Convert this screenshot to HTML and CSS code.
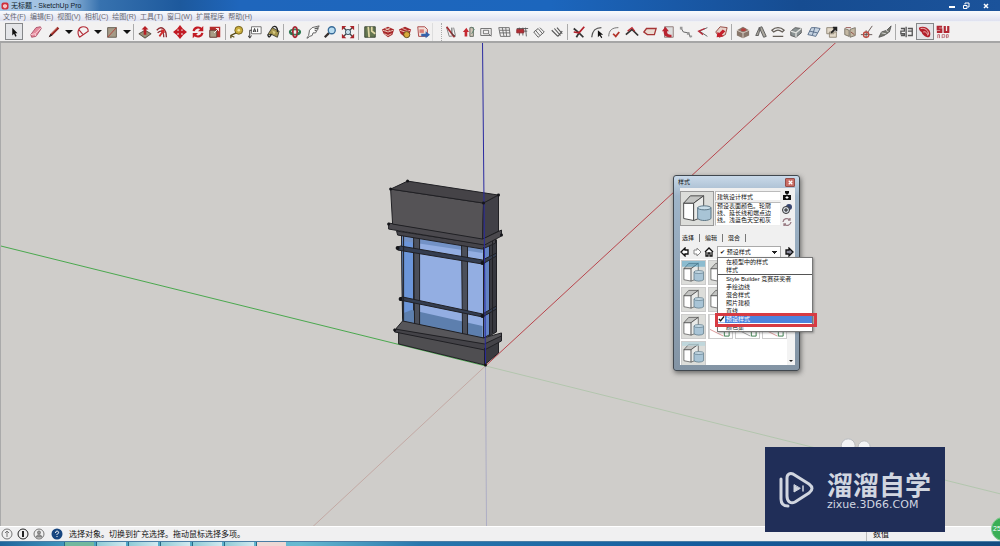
FILE: index.html
```html
<!DOCTYPE html>
<html lang="zh-CN">
<head>
<meta charset="utf-8">
<title>无标题 - SketchUp Pro</title>
<link rel="stylesheet" href="styles.css">
</head>
<body>
<div class="app">
<header class="titlebar">
  <svg class="app-icon" viewBox="0 0 8 8"><rect x="0.500" y="0.500" width="7" height="7" rx="2" fill="#d0303c"/><path d="M2 3l2-1 2 1v2L4 6.500 2 5z" fill="#f7c5c5"/></svg>
  <h1 class="title">无标题 - SketchUp Pro</h1>
  <div class="window-buttons">
    <button aria-label="最小化"><svg viewBox="0 0 8 8"><path d="M1 5h6" stroke="#fff" stroke-width="2"/></svg></button>
    <button aria-label="还原"><svg viewBox="0 0 8 8" fill="none" stroke="#fff"><path d="M3 2.500V1h4v4H5.500M1.500 3.500h3.500v3h-3.500z"/></svg></button>
    <button class="win-close" aria-label="关闭"><svg viewBox="0 0 8 8"><path d="M2 2l4 4M6 2L2 6" stroke="#fff" stroke-width="1.500"/></svg></button>
  </div>
</header>
<nav class="menubar">
  <button>文件(F)</button><button>编辑(E)</button><button>视图(V)</button><button>相机(C)</button><button>绘图(R)</button><button>工具(T)</button><button>窗口(W)</button><button>扩展程序</button><button>帮助(H)</button>
</nav>
<div class="toolbar">
  <div class="draw-tools">
    <button class="tool pressed select-tool" aria-label="选择"><svg viewBox="0 0 16 16"><path d="M6 3v9l2-2 1.500 3.500 1.500-1L9.500 9.500H12z" fill="#111"/></svg></button>
    <button class="tool" aria-label="橡皮擦"><svg viewBox="0 0 16 16"><path d="M2 11L8 3l5-1 1 2-6 9-5 1z" fill="#e58b9d" stroke="#a84a62"/><path d="M2 11l5-1 1 3M7 10l7-7" stroke="#fbd5dc" fill="none"/></svg></button>
    <button class="tool" aria-label="直线"><svg viewBox="0 0 16 16"><path d="M2 14l2-4 8-8 2 2-8 8z" fill="#8f2525"/><path d="M2 14l2-4 2 2z" fill="#222"/><path d="M5 10l7-7" stroke="#d66b55"/></svg></button>
    <button class="drop" aria-label="更多直线工具"></button>
    <button class="tool" aria-label="圆弧"><svg viewBox="0 0 16 16" fill="none" stroke="#b32a35"><path d="M4 14C0 7 4 2 8 2c4 0 6 2 6 5L4 14M3 5l5 6" stroke-width="1.300"/></svg></button>
    <button class="drop" aria-label="更多圆弧工具"></button>
    <button class="tool" aria-label="矩形"><svg viewBox="0 0 16 16"><path d="M3 3h10v11H3z" fill="#a69b87" stroke="#5e574c"/><path d="M3 14L13 3" stroke="#b33a35"/></svg></button>
    <button class="drop" aria-label="更多形状"></button>
  </div>
  <i class="sep"></i>
  <div class="tools five">
    <button class="tool" aria-label="推拉"><svg viewBox="0 0 16 16"><path d="M1 10l7-4 7 4-7 5z" fill="#9a9078" stroke="#4c463a"/><path d="M8 1l4 4H9.500v6h-3V5H4z" fill="#b72026"/></svg></button>
    <button class="tool" aria-label="偏移"><svg viewBox="0 0 16 16" fill="none"><path d="M2 6c5-6 11-2 11 8M3 9c4-4 7-2 7 5" stroke="#8e2b31" stroke-width="1.500"/><path d="M5 13l5-7M7 6h3v3" stroke="#d02b2b" stroke-width="2"/></svg></button>
    <button class="tool" aria-label="移动"><svg viewBox="0 0 16 16"><path d="M8 0l4 5H9.500v1.500H11V4l5 4-5 4V9.500H9.500V11H12l-4 5-4-5h2.500V9.500H5V12L0 8l5-4v2.500h1.500V5H4z" fill="#c21b24"/></svg></button>
    <button class="tool" aria-label="旋转"><svg viewBox="0 0 16 16"><path d="M3 7a5 5 0 0 1 9-2M13 9a5 5 0 0 1-9 2" stroke="#c21b24" stroke-width="2.500" fill="none"/><path d="M14 1v6H8zM2 15V9h6z" fill="#c21b24"/></svg></button>
    <button class="tool" aria-label="缩放"><svg viewBox="0 0 16 16"><path d="M2 2h12v12H2z" fill="#b52b2a"/><path d="M2 6h8v8H2z" fill="#a99d86" stroke="#5e3b32"/><path d="M7 9l5-5M9 4h3v3" stroke="#fff" fill="none"/></svg></button>
  </div>
  <i class="sep"></i>
  <div class="tools three">
    <button class="tool" aria-label="卷尺"><svg viewBox="0 0 16 16"><circle cx="10" cy="6" r="4.500" fill="#c9ac3c" stroke="#6b5918"/><circle cx="10" cy="6" r="1.500" fill="#f5e9a5"/><path d="M7 9l-6 3v3M1 12l4 2" stroke="#5b4d17" stroke-width="1.500" fill="none"/></svg></button>
    <button class="tool" aria-label="文字"><svg viewBox="0 0 16 16"><path d="M4 2h11v8H4z" fill="#fff" stroke="#666"/><path d="M6 8l1.500-4L9 8M6.500 7h2M11 4v4M4 6H2v8M0 12l2 3 2-3" stroke="#222" fill="none"/></svg></button>
    <button class="tool" aria-label="材质"><svg viewBox="0 0 16 16"><path d="M2 11l5-8 8 4-2 7-6-3z" fill="#a5954c" stroke="#37372b"/><path d="M7 3c4-4 7 1 6 5M2 11c1 4 3 3 4-1" fill="none" stroke="#222" stroke-width="1.500"/><path d="M7 6l4 2-2 3z" fill="#d9cb83"/></svg></button>
  </div>
  <i class="sep"></i>
  <div class="tools four">
    <button class="tool" aria-label="环绕观察"><svg viewBox="0 0 16 16" fill="none" stroke-width="2"><ellipse cx="8" cy="8" rx="6" ry="3" stroke="#36835b"/><ellipse cx="8" cy="8" rx="2.500" ry="6" stroke="#a62632"/><path d="M2 7l3 4M14 7l-3 4" stroke="#2d6e4a"/></svg></button>
    <button class="tool" aria-label="平移"><svg viewBox="0 0 16 16"><path d="M1 15l2-3 1-6 3-3 8-2-1 2-4 1 4 0-1 2-3 0 2 1-1 2-3 0-1 3-3 1-2 2z" fill="#fbfbfa" stroke="#555"/></svg></button>
    <button class="tool" aria-label="缩放视图"><svg viewBox="0 0 16 16"><path d="M2 14l5-5" stroke="#352f2d" stroke-width="2.500"/><circle cx="10" cy="6" r="4" fill="#b9dcf0" stroke="#376b98" stroke-width="1.500"/></svg></button>
    <button class="tool" aria-label="充满视窗"><svg viewBox="0 0 16 16"><path d="M2 2l12 12M14 2L2 14" stroke="#444" stroke-width="1.500"/><path d="M1 1h5L1 6zM15 1v5l-5-5zM1 15v-5l5 5zM15 15h-5l5-5z" fill="#a9252b"/><circle cx="8" cy="8" r="3" fill="#c5dfea" stroke="#344c5c"/></svg></button>
  </div>
  <i class="sep"></i>
  <div class="tools four">
    <button class="tool" aria-label="添加位置"><svg viewBox="0 0 16 16"><path d="M2 2h12v12H2z" fill="#657651" stroke="#36402e"/><path d="M6 2l1 12M10 2v5l4 3" stroke="#e1d9a6" stroke-width="2" fill="none"/></svg></button>
    <button class="tool" aria-label="获取模型"><svg viewBox="0 0 16 16"><path d="M1 5l7-3 7 3-2 6-5 3-5-4z" fill="#a7282b"/><path d="M2 6l6 2 6-2M4 10l4 2 4-2M5 4l5 2M11 3L5 6" stroke="#efd4c3" fill="none"/></svg></button>
    <button class="tool" aria-label="扩展仓库"><svg viewBox="0 0 16 16"><path d="M1 5l7-3 7 3-2 6-5 3-5-4z" fill="#a7282b"/><path d="M2 6l6 2 6-2M5 4l5 2" stroke="#efc5b5" fill="none"/><circle cx="10" cy="11" r="3.500" fill="#d8aa3c" stroke="#5b4817"/></svg></button>
    <button class="tool" aria-label="发送到布局"><svg viewBox="0 0 16 16"><path d="M2 2h8l3 3v8H3z" fill="#f1dfd9" stroke="#a53c3c"/><path d="M4 5h5v4H4z" fill="#d87b74"/><path d="M6 10h5V7l5 4-5 4v-2H6z" fill="#3462ac"/></svg></button>
  </div>
  <i class="grip"></i>
  <div class="tools seven">
    <button class="tool" aria-label="切割"><svg viewBox="0 0 16 16" fill="none"><path d="M3 3l3 10 7-1-2-9" stroke="#777"/><path d="M3 2l9 12" stroke="#a42d31" stroke-width="2"/><path d="M9 3v7l4 3" stroke="#444"/></svg></button>
    <button class="tool" aria-label="镜像"><svg viewBox="0 0 16 16"><path d="M1 8l4-5 3 5H6v5H3V8z" fill="#c52931"/><path d="M9 3h4v10H9z" fill="#d0c7b9" stroke="#5b645a"/><path d="M11 2l3 3-3 5" fill="none" stroke="#55816c"/></svg></button>
    <button class="tool" aria-label="窗框"><svg viewBox="0 0 16 16" fill="none" stroke="#666"><path d="M2 4h12v8H2zM5 6h6v4H5zM11 10l3 3" /></svg></button>
    <button class="tool" aria-label="网格"><svg viewBox="0 0 16 16" fill="none" stroke="#666"><path d="M2 3h12l1 10H4zM3 6h11M3 9h12M6 3l2 10M10 3l1 10"/></svg></button>
    <button class="tool" aria-label="栏杆"><svg viewBox="0 0 16 16" fill="none" stroke="#555"><path d="M2 4h13M3 7h11M5 3v9M9 3v9M12 3l1 10"/><path d="M2 5h8v4H2z" fill="#b22d33" stroke="#8d2c32"/></svg></button>
    <button class="tool" aria-label="百叶"><svg viewBox="0 0 16 16" fill="none" stroke="#555"><path d="M2 8l5 6 7-6-5-5M4 6l5 6M7 4l5 6M2 8l5-4"/></svg></button>
    <button class="tool" aria-label="屋面"><svg viewBox="0 0 16 16" fill="none" stroke="#555" stroke-width="1.300"><path d="M2 6l7 7M5 4l7 8M8 3l6 7M9 13l5-6"/></svg></button>
  </div>
  <i class="sep"></i>
  <div class="tools nine">
    <button class="tool" aria-label="修剪"><svg viewBox="0 0 16 16" fill="none"><path d="M2 4l6 5 5 5M5 14l3-5" stroke="#333" stroke-width="2"/><path d="M2 8l6 1 6-7" stroke="#b3202a" stroke-width="2"/></svg></button>
    <button class="tool" aria-label="弧线编辑"><svg viewBox="0 0 16 16" fill="none"><path d="M2 14C3 5 7 3 13 3" stroke="#555" stroke-width="1.500"/><path d="M9 6v8l2-2 2 3 1-1-2-3h3z" fill="#111"/></svg></button>
    <button class="tool" aria-label="倒角"><svg viewBox="0 0 16 16" fill="none"><path d="M2 13C2 6 6 3 13 3" stroke="#666"/><path d="M7 10l3 3 4-5" stroke="#b3352b" stroke-width="2"/></svg></button>
    <button class="tool" aria-label="折线"><svg viewBox="0 0 16 16" fill="none"><path d="M1 11l7-6 7 7" stroke="#333" stroke-width="2"/><path d="M3 7l5-4 3 4" stroke="#bd2d35" stroke-width="1.500"/></svg></button>
    <button class="tool" aria-label="面"><svg viewBox="0 0 16 16"><path d="M4 4h11l-2 7H5L1 8z" fill="#eadbd2" stroke="#a63535" stroke-width="1.500"/></svg></button>
    <button class="tool" aria-label="拉伸面"><svg viewBox="0 0 16 16"><path d="M4 2h10v12H4z" fill="#ddd" stroke="#8a7471"/><path d="M1 7l4-5 4 5H7c0 3 1 4 5 4v3C5 14 3 12 3 7z" fill="#b92330"/></svg></button>
    <button class="tool" aria-label="路径"><svg viewBox="0 0 16 16" fill="none"><path d="M2 3l3 5 6 1 2 5" stroke="#555"/><path d="M1 2h3v3H1zM9 8h3v3H9zM12 12h3v2h-3z" fill="#999"/></svg></button>
    <button class="tool" aria-label="夹角"><svg viewBox="0 0 16 16" fill="none"><path d="M13 3L4 7l9 6" stroke="#555"/><path d="M10 4L3 7l5 4" stroke="#b72937" stroke-width="1.500"/></svg></button>
    <button class="tool" aria-label="面推移"><svg viewBox="0 0 16 16"><path d="M2 8l5-6 8 1-2 8-7 3z" fill="#e6d1ca" stroke="#8e3e36"/><path d="M3 14l1-6 2 1 4-4 3 2-4 4 2 2z" fill="#c51f2c"/></svg></button>
  </div>
  <i class="sep"></i>
  <div class="tools nine">
    <button class="tool" aria-label="方块"><svg viewBox="0 0 16 16"><path d="M1 6l7-4 7 4v6l-7 3-7-3z" fill="#88776b"/><path d="M1 6l7 3 7-3M8 9v6" stroke="#ded3cb" fill="none"/><path d="M6 4h5v3H6z" fill="#b53e3b"/></svg></button>
    <button class="tool" aria-label="斜梁"><svg viewBox="0 0 16 16"><path d="M2 12l4-9 1 1-2 8zM6 3l3-1 5 11-3 1z" fill="#aaa79e" stroke="#555"/></svg></button>
    <button class="tool" aria-label="曲面"><svg viewBox="0 0 16 16" fill="none" stroke="#655f58" stroke-width="1.500"><path d="M1 6c4-4 10-4 14 0l-2 2c-4-3-6-3-10 0zM2 13h12"/></svg></button>
    <button class="tool" aria-label="倒圆"><svg viewBox="0 0 16 16"><path d="M2 7l5-4 7 1v5l-6 5-6-2z" fill="#8a9293" stroke="#555"/><path d="M2 7l6 2 6-5M8 9v5" stroke="#e1e2df" fill="none" stroke-width="1.500"/></svg></button>
    <button class="tool" aria-label="翻面"><svg viewBox="0 0 16 16"><path d="M1 11l4-8h5l5 1-5 9-4-1zM9 3l-3 9M3 7l9 2" fill="#c6d3e1" stroke="#516783"/></svg></button>
    <button class="tool" aria-label="导出面"><svg viewBox="0 0 16 16"><path d="M2 3h8v7H2zM5 8h8v6H5z" fill="#e2d9c9" stroke="#8b8271"/><path d="M7 9l6-6M9 3h4v4" stroke="#222" stroke-width="2" fill="none"/></svg></button>
    <button class="tool" aria-label="组件"><svg viewBox="0 0 16 16"><path d="M2 4l5 2v7l-5-2zM8 5l6-2v9l-6 2z" fill="#c3b8a3" stroke="#777062"/><path d="M3 3h6M9 8l4 3" stroke="#8e4740"/></svg></button>
    <button class="tool" aria-label="定位"><svg viewBox="0 0 16 16" fill="none"><path d="M14 1L7 11M1 11h13M7 6v9" stroke="#5b4d49"/><circle cx="7" cy="11" r="3" stroke="#bd493f" stroke-width="1.500"/></svg></button>
    <button class="tool" aria-label="放样"><svg viewBox="0 0 16 16"><path d="M1 14l3-6 6-2 5-5-2 7-6 4z" fill="#777970" stroke="#555"/><path d="M4 9l5 1M9 6l3 2" stroke="#ddd"/></svg></button>
  </div>
  <i class="sep"></i>
  <div class="tools three">
    <button class="tool" aria-label="对齐"><svg viewBox="0 0 16 16" fill="none" stroke="#555" stroke-width="1.500"><path d="M7 2v12M1 4h4v3H1v3h4v2H1M9 4h5v3H9h5v5H9"/></svg></button>
    <button class="tool pressed" aria-label="插件"><svg viewBox="0 0 16 16"><path d="M1 3c4-2 9-1 12 3 2 4 1 8-1 8-4 0-7-3-8-6-2-1-3-3-3-5z" fill="#b31f2b"/><path d="M3 4c5-1 9 2 9 7M6 8c2-1 5 1 5 4" stroke="#f5d2cf" fill="none"/></svg></button>
    <button class="tool" aria-label="SUAPP"><svg viewBox="0 0 16 16" fill="none"><path d="M7 2H2v3h4v3H1M10 1v7h4V1" stroke="#b22733" stroke-width="2.500"/><path d="M2 15v-4h2v4M7 15v-4h3v3H7M12 15v-4h2v3h-2" stroke="#ba6770"/></svg></button>
  </div>
</div>
<main class="viewport">
  <svg class="scene" viewBox="0 42 1000 485" preserveAspectRatio="xMidYMid slice">
    <g fill="none" stroke-width="1">
      <path d="M485 366L312 527" stroke="#c3a9a4"/>
      <path d="M485 366l1 161" stroke="#aeaec5"/>
      <path d="M485 366L1000 494" stroke="#b3c6ae"/>
      <path d="M485 366L836 42" stroke="#b9444b"/>
      <path d="M0 246l485 120" stroke="#49a84d"/>
    </g>
    <g stroke="#202024" stroke-width="1" stroke-linejoin="round">
      <path d="M398 332l86 16v17l-86-21z" fill="#4f4e51"/>
      <path d="M484 348l14-9v14l-14 12z" fill="#3b3b40"/>
      <path d="M402 321l81 17 13-7v-91l-14 7-81-12z" fill="#93aee2"/>
      <path d="M483 247l13-7v91l-13 7z" fill="#6383c4"/>
      <path d="M401 235l12 2v86l-11-2z" fill="#6c96da"/>
      <path d="M403 313l8-3 71 16v12l-80-17z" fill="#5d7fae" stroke="none"/>
      <path d="M402 236l80 13v4l-80-12z" fill="#7392c6" stroke="none"/>
      <path d="M489 243l7-3v92l-7 4z" fill="#37383f"/>
      <path d="M413 235l6 1v90l-5-1zM461 243l6 1v92l-5-1z" fill="#4b4f5a"/>
      <path d="M397 247l3-1 82 14 14-7v3l-14 8-85-14zM399 298l3-1 80 17 14-8v3l-14 8-83-17z" fill="#343d50"/>
      <path d="M396 328l6-7 81 17 18-5v4l-17 8-88-15z" fill="#57565a"/>
      <path d="M394 329l90 15 17-8v5l-17 9-90-18z" fill="#444348"/>
      <path d="M396 231l86 13 13-5v4l-13 6-85-14z" fill="#45444a"/>
      <path d="M388 223l96 15 17-8v6l-17 9-96-16z" fill="#4b494e"/>
      <path d="M390 189l93 14-1 36-90-15z" fill="#555356"/>
      <path d="M390 189l17-8 91 14-15 8z" fill="#454347"/>
      <path d="M483 203l15-8v36l-16 8z" fill="#414047"/>
      <path d="M403 236v85M483 247v91M484 348v17M492 241v92" fill="none"/>
    </g>
    <path d="M482 42l3 324" stroke="#2929a0" fill="none"/>
    <g fill="#151519"><circle cx="390" cy="189" r="1.500"/><circle cx="407" cy="181" r="1.500"/><circle cx="498" cy="195" r="1.500"/><circle cx="483" cy="203" r="1.500"/><circle cx="388" cy="224" r="1.500"/><circle cx="501" cy="235" r="1.500"/><circle cx="397" cy="248" r="2"/><circle cx="400" cy="299" r="2"/><circle cx="482" cy="263" r="2"/><circle cx="482" cy="316" r="2"/><circle cx="485" cy="365" r="1.500"/><circle cx="394" cy="330" r="1.500"/></g>
    <g fill="#f2f3f5" stroke="#b9bbbe"><circle cx="848" cy="446" r="7"/><circle cx="864" cy="447" r="6"/></g>
  </svg>

  <section class="dialog" aria-label="样式">
    <header class="dialog-title"><h2>样式</h2><button class="dialog-close" aria-label="关闭样式"><svg viewBox="0 0 8 8"><path d="M2 2l4 4M6 2L2 6" stroke="#fff" stroke-width="1.500"/></svg></button></header>
    <div class="dialog-body">
      <div class="style-info">
        <svg class="preview" viewBox="0 0 24 24"><use href="#style-thumb"/></svg>
        <div class="style-fields">
          <input class="field" aria-label="样式名称" value="建筑设计样式">
          <textarea class="field description" aria-label="样式说明">预设表面颜色。轮廓
线、延长线和端点边
线。浅蓝色天空和灰</textarea>
        </div>
        <div class="side-actions">
          <button aria-label="显示辅助选择窗格"><svg viewBox="0 0 10 10"><path d="M1 4h8v5H1z" fill="#111"/><path d="M3 0h4v2l-2 2-2-2z" fill="#111"/><path d="M5 5v3M3.500 6.500h3" stroke="#fff"/></svg></button>
          <button aria-label="创建新样式"><svg viewBox="0 0 10 10"><circle cx="7" cy="3" r="3" fill="#38466f"/><circle cx="4" cy="6" r="3.500" fill="#d8dfe8" stroke="#333"/><path d="M4 4v4M2 6h4" stroke="#222"/></svg></button>
          <button aria-label="更新样式"><svg viewBox="0 0 10 10" fill="none" stroke="#987b83" stroke-width="1.300"><path d="M1 5a4 4 0 0 1 7-2M9 5a4 4 0 0 1-7 2M8 1v2H6M2 9V7h2"/></svg></button>
        </div>
      </div>
      <div class="tabs" role="tablist"><button role="tab" aria-selected="true">选择</button><button role="tab">编辑</button><button role="tab">混合</button></div>
      <div class="style-nav">
        <button aria-label="后退"><svg viewBox="0 0 10 10"><path d="M1 5l4-4v2h3v4H5v2z" fill="#fff" stroke="#111" stroke-width="1.300"/></svg></button>
        <button aria-label="前进"><svg viewBox="0 0 10 10"><path d="M9 5L5 1v2H2v4h3v2z" fill="#fff" stroke="#888"/></svg></button>
        <button aria-label="在模型中"><svg viewBox="0 0 10 10"><path d="M1 5l4-4 4 4M2 5v4h2V6h2v3h2V5" fill="#fff" stroke="#111" stroke-width="1.300"/></svg></button>
        <select class="collection" aria-label="样式集合"><option>✔ 预设样式</option></select>
        <button class="details" aria-label="详细信息"><svg viewBox="0 0 10 10"><path d="M9 5L5 1v2H2v4h3v2z" fill="#889" stroke="#111" stroke-width="1.300"/></svg></button>
      </div>
      <div class="style-list">
        <svg class="defs" viewBox="0 0 24 24"><defs><g id="style-thumb" stroke-width=".7"><path d="M0 0h24v24H0z" fill="#dcddda"/><path d="M2 8h7.500v13L2 19.500z" fill="#fff" stroke="#444"/><path d="M2 8l5-5.500h10L9.500 8z" fill="#c3c4c2" stroke="#444"/><path d="M9.500 8L17 2.500V18l-7.500 3z" fill="#e9eae8" stroke="#444"/><path d="M12.500 11.500h10v8c-2 2-8 2-10 0z" fill="#a8c4d6" stroke="#567080"/><ellipse cx="17.500" cy="11.500" rx="5" ry="1.500" fill="#c9dde8" stroke="#567080"/></g></defs></svg>
        <div class="thumb-grid">
          <button class="thumb" aria-label="建筑设计样式"><svg viewBox="0 0 24 24"><use href="#style-thumb"/><path d="M0 0h24v6H0z" fill="#3c9bc5" opacity=".5"/></svg></button><button class="thumb" aria-label="样式 2"><svg viewBox="0 0 24 24"><use href="#style-thumb"/></svg></button><i></i><i></i>
          <button class="thumb" aria-label="样式 5"><svg viewBox="0 0 24 24"><use href="#style-thumb"/></svg></button><button class="thumb" aria-label="样式 6"><svg viewBox="0 0 24 24"><use href="#style-thumb"/></svg></button><i></i><i></i>
          <button class="thumb" aria-label="样式 9"><svg viewBox="0 0 24 24"><use href="#style-thumb"/></svg></button>
          <button class="thumb" aria-label="样式 10"><svg viewBox="0 0 24 24" fill="none"><path d="M0 24V0" stroke="#aaa"/><path d="M1 15l14 7" stroke="#d99"/><path d="M16 17h5v5h-5z" stroke="#397a4b"/></svg></button><button class="thumb" aria-label="样式 11"><svg viewBox="0 0 24 24" fill="none"><path d="M1 15l14 7" stroke="#999"/><path d="M16 17h5v5h-5z" stroke="#397a4b"/></svg></button><button class="thumb" aria-label="样式 12"><svg viewBox="0 0 24 24" fill="none"><path d="M1 15l14 7" stroke="#d99"/><path d="M16 17h5v5h-5z" stroke="#397a4b"/></svg></button>
          <button class="thumb" aria-label="样式 13"><svg viewBox="0 0 24 24"><use href="#style-thumb"/><path d="M0 0h24v4H0z" fill="#b4d4dd" opacity=".7"/></svg></button>
        </div>
        <div class="scrollbar"><button aria-label="向下滚动"></button></div>
      </div>
    </div>
    <ul class="popup">
      <li><button>在模型中的样式</button></li>
      <li class="divided"><button>样式</button></li>
      <li><button>Style Builder 竞赛获奖者</button></li>
      <li><button>手绘边线</button></li>
      <li><button>混合样式</button></li>
      <li><button>照片建模</button></li>
      <li><button>直线</button></li>
      <li class="current"><button><svg viewBox="0 0 8 8"><path d="M0 0h8v8H0z" fill="#fff"/><path d="M1 4l2 2 4-5" stroke="#111" stroke-width="1.500" fill="none"/></svg>预设样式</button></li>
      <li><button>颜色集</button></li>
    </ul>
    <div class="highlight"></div>
  </section>
</main>
<footer class="statusbar">
  <svg viewBox="0 0 12 12" fill="none" stroke="#777"><circle cx="6" cy="6" r="5"/><path d="M6 9V4M4 5l2-2 2 2"/></svg>
  <svg viewBox="0 0 12 12" fill="none" stroke="#222"><circle cx="6" cy="6" r="5"/><path d="M6 3v6" stroke-width="2"/></svg>
  <svg viewBox="0 0 12 12" fill="#999" stroke="#777"><circle cx="6" cy="6" r="5" fill="#eee"/><circle cx="6" cy="4.500" r="1.500"/><path d="M3 9c1-3 5-3 6 0z"/></svg>
  <svg class="help" viewBox="0 0 12 12"><circle cx="6" cy="6" r="5.500" fill="#17467f"/><path d="M4.500 5c0-3 4-2 3 0L6 6.500V7M6 8v1" fill="none" stroke="#fff"/></svg>
  <p>选择对象。切换到扩充选择。拖动鼠标选择多项。</p>
  <span class="measure">数值</span>
</footer>
<div class="taskbar"><i class="start"></i><i></i><i></i><i></i><i></i><i></i><i class="active"></i></div>
<aside class="watermark">
  <svg viewBox="0 0 36 38" fill="none" stroke="#d1d6e0" stroke-linecap="round" stroke-linejoin="round"><path d="M2 8v20c0 5 3 7 7 7" stroke-width="3"/><path d="M8 25V7c0-4 3-5 6-4l16 10c4 3 4 6 0 9L16 31c-4 2-8 0-8-6" stroke-width="3"/><path d="M15 14v7l6-3.500z" fill="#d1d6e0" stroke-width="1"/><path d="M24 15v5" stroke-width="1.500"/></svg>
  <div><strong>溜溜自学</strong><span>zixue.3D66.COM</span></div>
</aside>
<div class="badge">25</div>
</div>
</body>
</html>
```
FILE: styles.css
```css
* { box-sizing: border-box; }
body { margin: 0; font: 6px/8px "Liberation Sans", "Noto Sans CJK SC", sans-serif; color: #111; }
h1, h2, p, ul { margin: 0; padding: 0; font: inherit; }
ul { list-style: none; }
button { margin: 0; padding: 0; border: 0; background: none; font: inherit; color: inherit; }
svg { display: block; }
.app { position: relative; display: flex; flex-direction: column; height: 100vh; overflow: hidden; }

.titlebar { display: flex; align-items: center; flex: none; height: 11px; padding: 0 4px 0 1px; gap: 2px; background: linear-gradient(90deg, #a9c9e8 0, #9ebfdf 65px, #3772af 100px, #1d599d 180px, #1f66bc 240px, #1c66bd 55%, #164c91 80%, #1b539b); }
.app-icon { width: 8px; height: 8px; }
.title { flex: 1; font-size: 7px; line-height: 11px; color: #101c2c; }
.window-buttons { display: flex; gap: 6px; }
.window-buttons svg { width: 8px; height: 8px; }
.win-close { margin: 0 6px; }

.menubar { display: flex; flex: none; gap: 4px; height: 11px; padding: 0 3px; background: linear-gradient(#f8fafd, #dfe1f0); border-bottom: 1px solid #eef0f5; font-size: 7px; line-height: 11px; color: #666873; }

.toolbar { display: flex; align-items: center; flex: none; height: 21px; padding-left: 5px; background: #f2f1f1; border-bottom: 2px solid #a5a5a5; }
.draw-tools { display: flex; align-items: center; }
.tools { display: grid; grid-auto-flow: column; grid-auto-columns: 1fr; }
.tool { display: grid; place-items: center; height: 17px; min-width: 0; }
.draw-tools .tool { width: 18px; }
.draw-tools .select-tool { margin-right: 4px; }
.tool svg { width: 14px; height: 14px; }
.pressed { background: #e4e5e8; border: 1px solid #858789; }
.drop { width: 11px; height: 17px; display: grid; place-items: center; }
.drop::before { content: ""; border: 4px solid transparent; border-top-color: #111; border-bottom: 0; }
.five { width: 88px; }
.three { width: 54px; }
.four { width: 71px; }
.seven { width: 124px; }
.nine { width: 160px; }
.sep { width: 4px; height: 16px; border-left: 1px solid #aaa; margin-left: 1px; margin-right: -1px; }
.grip { width: 10px; height: 18px; border-left: 1px solid #ddd; border-right: 1px dotted #aaa; }

.viewport { position: relative; flex: 1; min-height: 0; background: #cfcdca; border-left: 1px solid #aaa; }
.scene { position: absolute; inset: 0; width: 100%; height: 100%; }

.dialog { position: absolute; left: 672px; top: 132px; width: 127px; padding: 0 4px 5px 6px; border: 1px solid #41484f; border-radius: 3px; background: linear-gradient(#c9d9e9, #9fb5c9 20px, #8394a4); box-shadow: 1px 2px 5px #333a; }
.dialog-title { display: flex; align-items: center; justify-content: space-between; height: 12px; }
.dialog-title h2 { margin-left: -2px; }
.dialog-close { display: grid; place-items: center; width: 10px; height: 9px; border: 1px solid #934b47; border-radius: 1px; background: #c96d65; }
.dialog-close svg { width: 7px; height: 7px; }
.dialog-body { background: #f0f0f0; }
.style-info { display: flex; gap: 1px; padding-top: 3px; }
.preview { width: 34px; height: 35px; border: 1px solid #999; background: #dedfdc; }
.style-fields { display: flex; flex-direction: column; gap: 1px; width: 66px; }
.field { display: block; width: 100%; height: 10px; margin: 0; padding: 0 1px; border: 1px solid #bbb; border-right-color: #eee; border-bottom-color: #eee; border-radius: 0; background: #fff; font: inherit; color: #111; }
.description { height: 24px; line-height: 7px; resize: none; overflow: hidden; white-space: pre; }
.side-actions { display: flex; flex-direction: column; gap: 3px; }
.side-actions svg, .style-nav svg { width: 10px; height: 10px; }
.tabs { display: flex; gap: 3px; padding: 7px 0 3px; }
.tabs button { padding: 0 5px 0 2px; border-right: 1px solid #777; }
.style-nav { display: flex; align-items: center; gap: 2px; padding: 1px 0; }
.collection { width: 64px; height: 12px; margin: 0 1px; padding: 0 9px 0 2px; border: 1px solid #aaa; border-radius: 0; appearance: none; font: inherit; color: #111; background: linear-gradient(135deg, #222 50%, transparent 50%) right 2px center / 3px 3px no-repeat, linear-gradient(225deg, #222 50%, transparent 50%) right 5px center / 3px 3px no-repeat, #fff; }
.style-list { position: relative; display: flex; height: 106px; background: #fff; }
.defs { position: absolute; width: 0; height: 0; }
.thumb-grid { display: grid; grid-template-columns: repeat(4, 25px); grid-auto-rows: 25px; gap: 2px; padding: 1px; flex: 1; overflow: hidden; }
.thumb { border: 1px solid #ccc; }
.thumb svg { width: 23px; height: 23px; }
.scrollbar { display: flex; align-items: flex-end; justify-content: center; width: 8px; background: #f3f3f3; }
.scrollbar button { margin-bottom: 3px; border: 2px solid transparent; border-top-color: #222; border-bottom: 0; }

.popup { position: absolute; left: 43px; top: 81px; width: 96px; border: 1px solid #777; background: #fff; box-shadow: 1px 1px 2px #5558; color: #111; }
.popup button { position: relative; display: block; width: 100%; height: 8px; padding-left: 8px; text-align: left; line-height: 8px; white-space: nowrap; }
.popup svg { position: absolute; left: 0; top: 0; width: 7px; height: 8px; }
.divided { border-bottom: 1px solid #555; }
.current button { background: #4c83dd; color: #fff; }
.highlight { position: absolute; left: 41px; top: 137px; width: 102px; height: 14px; border: 3px solid #d73b43; pointer-events: none; }

.statusbar { display: flex; align-items: center; flex: none; gap: 4px; height: 15px; padding-left: 1px; background: #f0f0f1; border-top: 1px solid #fff; font-size: 8px; line-height: 13px; }
.statusbar svg { width: 12px; height: 12px; }
.statusbar .help { margin: 0 2px; }
.measure { margin-left: auto; width: 134px; padding-left: 6px; border-left: 1px solid #bbb; }
.taskbar { display: flex; flex: none; gap: 2px; height: 5px; padding-left: 64px; border-top: 1px solid #4a7da5; background: linear-gradient(90deg, #1e649b, #49a2c5 8%, #67bad1 30%, #2876ad 42%, #155c9d 70%, #144b80); }
.taskbar i { width: 30px; border-left: 1px solid #276985; background: linear-gradient(90deg, #8ecbd6, #d3eaf0); }
.taskbar .start { background: #72b89e; }
.taskbar .active { background: #eed8d4; }

.watermark { position: absolute; right: 55px; bottom: 14px; display: flex; align-items: center; gap: 12px; width: 180px; height: 85px; padding-left: 14px; background: #202e58; color: #d1d6e0; }
.watermark svg { width: 36px; height: 38px; }
.watermark div { display: flex; flex-direction: column; white-space: nowrap; }
.watermark strong { font: 700 26px/30px "Noto Sans CJK SC", sans-serif; }
.watermark span { font: 11px/12px "DejaVu Sans", sans-serif; }
.badge { position: absolute; right: -15px; bottom: 5px; width: 24px; height: 24px; padding-left: 1px; border: 1px solid #88ca92; border-radius: 50%; background: #39ae55; color: #fff; font-size: 7px; line-height: 22px; }
```
